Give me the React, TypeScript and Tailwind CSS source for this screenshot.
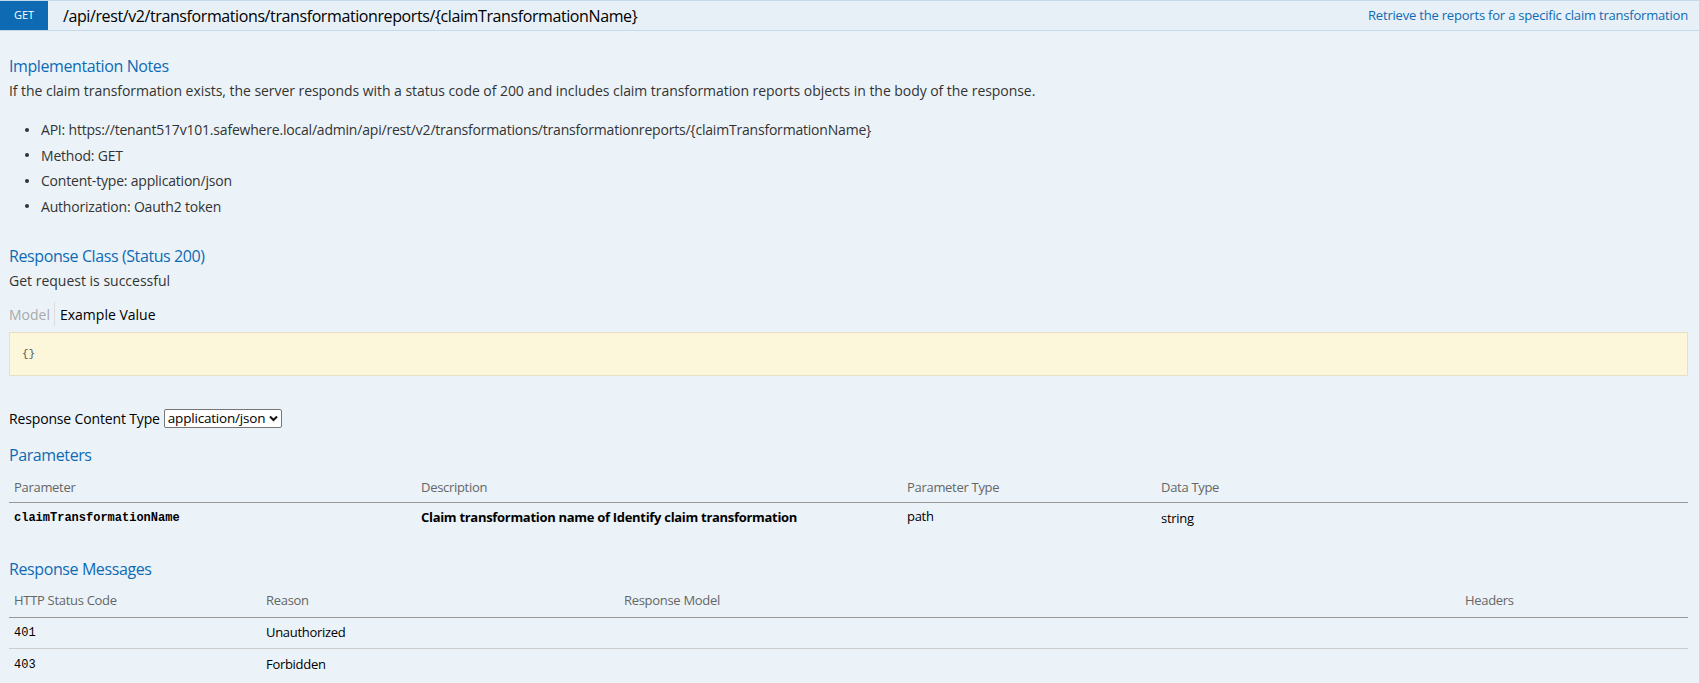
import React from 'react';

const font = { fontFamily: '"Open Sans", "Noto Sans", sans-serif' };
const mono = { fontFamily: '"Liberation Mono", monospace' };

const ChevronDown: React.FC = () => (
  <svg width="9" height="7" viewBox="0 0 9 7" className="ml-[4px]">
    <path d="M1 1.5 L4.5 5 L8 1.5" stroke="#111" strokeWidth="2" fill="none" />
  </svg>
);

const notes = [
  'API: https://tenant517v101.safewhere.local/admin/api/rest/v2/transformations/transformationreports/{claimTransformationName}',
  'Method: GET',
  'Content-type: application/json',
  'Authorization: Oauth2 token',
];

export default function App() {
  return (
    <div className="w-[1700px] h-[683px] overflow-hidden bg-[#ebf3f9] border-r border-[#c3d9ec] text-[#333]" style={font}>
      {/* Heading bar */}
      <div className="flex items-center h-[31px] bg-[#e7f0f7] border-t border-b border-[#c3d9ec]">
        <span className="flex items-center justify-center w-[48px] h-[29px] bg-[#0f6ab4] text-white text-[11px]">
          GET
        </span>
        <span className="ml-[15px] text-[16px] text-black tracking-[-0.4px]">
          /api/rest/v2/transformations/transformationreports/{'{claimTransformationName}'}
        </span>
        <span className="ml-auto mr-[11px] text-[13px] text-[#0f6ab4] tracking-[-0.2px]">
          Retrieve the reports for a specific claim transformation
        </span>
      </div>

      <div className="px-[9px] pr-[11px]">
        {/* Implementation Notes */}
        <h4 className="mt-[24px] text-[16px] leading-[22px] text-[#0f6ab4] tracking-[-0.4px]">Implementation Notes</h4>
        <p className="mt-[4px] text-[14px] leading-[20px] tracking-[-0.05px]">
          If the claim transformation exists, the server responds with a status code of 200 and includes claim transformation reports objects in the body of the response.
        </p>
        <ul className="mt-[16px] pl-[16px] text-[14px] leading-[25.5px] tracking-[-0.2px]">
          {notes.map((n, i) => (
            <li key={i} className="flex items-center">
              <span className="w-[4px] h-[4px] rounded-full bg-[#333] mr-[12px]" />
              <span>{n}</span>
            </li>
          ))}
        </ul>

        {/* Response Class */}
        <h4 className="mt-[26px] text-[16px] leading-[22px] text-[#0f6ab4] tracking-[-0.4px]">Response Class (Status 200)</h4>
        <p className="mt-[4px] text-[14px] leading-[20px]">Get request is successful</p>
        <div className="mt-[11px] flex items-stretch h-[24px] text-[14px]">
          <span className="flex items-center pr-[4px] text-[#aaa]">Model</span>
          <span className="flex items-center pl-[5px] border-l border-[#ddd] text-black">Example Value</span>
        </div>
        <div className="mt-[6px] h-[44px] flex items-center pl-[12px] bg-[#fcf6db] border border-[#e5e0c6]">
          <span className="text-[11px] text-[#555]" style={mono}>{'{}'}</span>
        </div>

        {/* Response content type */}
        <div className="mt-[32px] flex items-center h-[20px] text-[14px]">
          <span className="text-black tracking-[-0.15px]">Response Content Type</span>
          <span className="ml-[4px] flex items-center h-[19px] px-[3px] border border-[#767676] rounded-[2px] bg-white text-[13.5px] text-black tracking-[-0.2px]">
            application/json
            <ChevronDown />
          </span>
        </div>

        {/* Parameters */}
        <h4 className="mt-[16px] text-[16px] leading-[22px] text-[#0f6ab4] tracking-[-0.4px]">Parameters</h4>
        <div className="mt-[7px] text-[13px] tracking-[-0.3px]">
          <div className="grid grid-cols-[407px_486px_254px_1fr] h-[30px] items-center border-b border-[#999] text-[#666]">
            <span className="pl-[5px]">Parameter</span>
            <span className="pl-[5px]">Description</span>
            <span className="pl-[5px]">Parameter Type</span>
            <span className="pl-[5px]">Data Type</span>
          </div>
          <div className="grid grid-cols-[407px_486px_254px_1fr] h-[30px] items-center text-black">
            <span className="pl-[5px] text-[12px] font-bold tracking-normal" style={mono}>
              claimTransformationName
            </span>
            <span className="pl-[5px] font-bold">Claim transformation name of Identify claim transformation</span>
            <span className="pl-[5px] -mt-[2px]">path</span>
            <span className="pl-[5px] mt-[1px]">string</span>
          </div>
        </div>

        {/* Response Messages */}
        <h4 className="mt-[25px] text-[16px] leading-[22px] text-[#0f6ab4] tracking-[-0.4px]">Response Messages</h4>
        <div className="mt-[4px] text-[13px] tracking-[-0.3px]">
          <div className="grid grid-cols-[252px_358px_841px_1fr] h-[34px] items-center border-b border-[#999] text-[#666]">
            <span className="pl-[5px]">HTTP Status Code</span>
            <span className="pl-[5px]">Reason</span>
            <span className="pl-[5px]">Response Model</span>
            <span className="pl-[5px]">Headers</span>
          </div>
          {[
            { code: '401', reason: 'Unauthorized' },
            { code: '403', reason: 'Forbidden' },
          ].map((r, i) => (
            <div
              key={r.code}
              className={`grid grid-cols-[252px_358px_841px_1fr] h-[31px] items-center text-black ${i === 0 ? 'border-b border-[#ccc]' : ''}`}
            >
              <span className="pl-[5px] text-[12px] tracking-normal" style={mono}>
                {r.code}
              </span>
              <span className="pl-[5px]">{r.reason}</span>
              <span />
              <span />
            </div>
          ))}
        </div>
      </div>
    </div>
  );
}
